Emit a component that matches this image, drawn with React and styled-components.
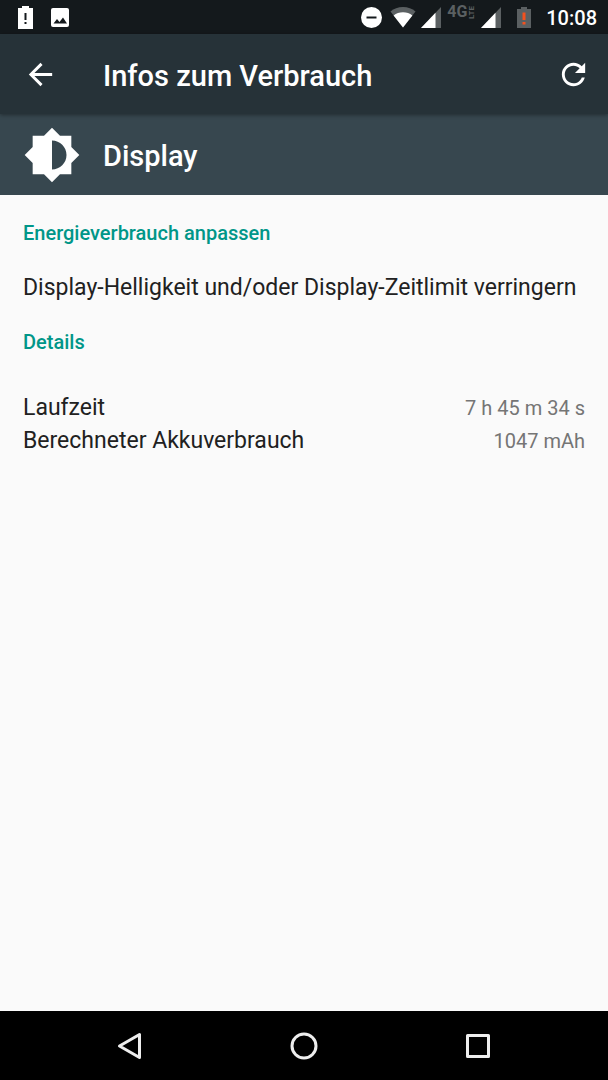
import React from 'react'
import styled, { createGlobalStyle } from 'styled-components'

const GlobalStyle = createGlobalStyle`
    * {
        box-sizing: border-box;
    }
    body {
        margin: 0;
        background: #fafafa;
        font-family: Roboto, "Noto Sans", sans-serif;
    }
    h1, h2, p, dl, dt, dd {
        margin: 0;
        font-weight: 400;
    }
`;

const details = [
    { label: 'Laufzeit', value: '7 h 45 m 34 s' },
    { label: 'Berechneter Akkuverbrauch', value: '1047 mAh' },
]

function SignalIcon() {
    return (
        <svg width="20" height="21" viewBox="0 0 20 21" aria-hidden="true">
            <path d="M20 0v21H0z" fill="#5b6062" />
            <path d="M14.500 5.800V21H0z" fill="#fff" />
        </svg>
    )
}

function StatusBar() {
    return (
        <StatusBarStyled>
            <div className="notifications">
                <svg width="15" height="23" viewBox="0 0 15 23" aria-hidden="true">
                    <path d="M4 0h7v2h4v21H0V2h4z" fill="#fff" />
                    <path d="M6.5 7h2v7h-2zM6.5 16h2v2h-2z" fill="#14191c" />
                </svg>
                <svg width="18" height="20" viewBox="0 0 18 20" aria-hidden="true">
                    <rect y="1" width="18" height="19" rx="2" fill="#fff" />
                    <path d="M2.5 16.500l3.500-4.500 2.500 3 3.500-4.500 4 6z" fill="#14191c" />
                </svg>
            </div>
            <div className="system">
                <svg width="21" height="21" viewBox="0 0 21 21" aria-hidden="true">
                    <circle cx="10.5" cy="10.5" r="10.5" fill="#fff" />
                    <path d="M5.5 9.5h10v2h-10z" fill="#14191c" />
                </svg>
                <svg className="wifi" width="26" height="21" viewBox="0 0 26 21" aria-hidden="true">
                    <path d="M13 20.500L.5 4.500C3.900 1.600 8 0 13 0s9.100 1.600 12.500 4.500z" fill="#5b6062" />
                    <path d="M13 20.500L3.600 8.500C6.300 6.300 9.300 5.200 13 5.200s6.700 1.100 9.400 3.300z" fill="#fff" />
                </svg>
                <SignalIcon />
                <Network>4G<small>LTE</small></Network>
                <SignalIcon />
                <svg className="battery" width="14" height="21" viewBox="0 0 14 21" aria-hidden="true">
                    <path d="M4 0h6v2h4v19H0V2h4z" fill="#5b6062" />
                    <path d="M5.500 5.500h3v7.500h-3zM5.500 15h3v2.500h-3z" fill="#f4511e" />
                </svg>
                <time>10:08</time>
            </div>
        </StatusBarStyled>
    )
}

function App() {
    return (
        <>
            <GlobalStyle />
            <Screen>
                <StatusBar />
                <AppBar>
                    <IconButton type="button" aria-label="Zurück">
                        <svg viewBox="0 0 24 24"><path d="M20 11H7.830l5.590-5.590L12 4l-8 8 8 8 1.410-1.410L7.830 13H20v-2z" /></svg>
                    </IconButton>
                    <Title as="h1">Infos zum Verbrauch</Title>
                    <IconButton type="button" aria-label="Aktualisieren">
                        <svg viewBox="0 0 24 24"><path d="M17.650 6.350C16.200 4.900 14.210 4 12 4c-4.420 0-7.990 3.580-7.990 8s3.570 8 7.990 8c3.730 0 6.840-2.550 7.730-6h-2.080c-.82 2.330-3.040 4-5.650 4-3.310 0-6-2.690-6-6s2.690-6 6-6c1.660 0 3.140.69 4.220 1.780L13 11h7V4l-2.350 2.350z" /></svg>
                    </IconButton>
                </AppBar>
                <Header>
                    <svg viewBox="0 0 24 24" aria-hidden="true">
                        <path d="M20 15.310L23.310 12 20 8.690V4h-4.690L12 .69 8.690 4H4v4.690L.69 12 4 15.310V20h4.690L12 23.310 15.310 20H20v-4.690zM12 18V6c3.310 0 6 2.690 6 6s-2.690 6-6 6z" />
                    </svg>
                    <Title>Display</Title>
                </Header>
                <Content>
                    <Category>Energieverbrauch anpassen</Category>
                    <Tip>Display-Helligkeit und/oder Display-Zeitlimit verringern</Tip>
                    <Category>Details</Category>
                    <DetailList>
                        {details.map(item => (
                            <DetailRow key={item.label}>
                                <dt>{item.label}</dt>
                                <dd>{item.value}</dd>
                            </DetailRow>
                        ))}
                    </DetailList>
                </Content>
                <NavBar>
                    <NavButton type="button" aria-label="Zurück">
                        <svg width="30" height="30" viewBox="0 0 30 30"><path d="M24.500 3.500v23L4.500 15z" /></svg>
                    </NavButton>
                    <NavButton type="button" aria-label="Startbildschirm">
                        <svg width="30" height="30" viewBox="0 0 30 30"><circle cx="15" cy="15" r="12" /></svg>
                    </NavButton>
                    <NavButton type="button" aria-label="Übersicht">
                        <svg width="30" height="30" viewBox="0 0 30 30"><rect x="4.500" y="4.500" width="21" height="21" /></svg>
                    </NavButton>
                </NavBar>
            </Screen>
        </>
    )
}

const Screen = styled.div`
    display: flex;
    flex-direction: column;
    min-height: 100vh;
`;

const StatusBarStyled = styled.header`
    display: flex;
    justify-content: space-between;
    height: 34px;
    padding: 0 11px 0 18px;
    background: #14191c;
    .notifications, .system{
        display: flex;
        align-items: center;
    }
    .notifications{
        gap: 18px;
    }
    .wifi{
        margin: 0 5px 0 8px;
    }
    .battery{
        margin: 0 15px 0 16px;
    }
    time{
        padding-top: 2px;
        color: #fff;
        font-size: 20px;
        font-weight: 500;
        line-height: 34px;
    }
`;

const Network = styled.span`
    display: flex;
    align-self: flex-start;
    align-items: center;
    width: 29px;
    margin: 4px 5px 0 6px;
    color: #5b6062;
    font-size: 16px;
    font-weight: 700;
    line-height: 16px;
    small{
        writing-mode: vertical-rl;
        transform: rotate(180deg);
        font-size: 8px;
        font-weight: 700;
        line-height: 10px;
    }
`;

const AppBar = styled.div`
    position: relative;
    display: flex;
    align-items: center;
    height: 80px;
    padding: 0 17px 0 23px;
    background: #263238;
    box-shadow: 0 1px 4px rgba(0, 0, 0, 0.4);
    color: #fff;
    h1{
        flex: 1;
        margin-left: 45px;
    }
`;

const Title = styled.h2`
    && {
        padding-top: 3px;
        font-size: 29px;
        font-weight: 500;
        line-height: 40px;
    }
`;

const IconButton = styled.button`
    width: 35px;
    height: 35px;
    padding: 0;
    border: 0;
    background: none;
    color: #fff;
    svg{
        display: block;
        fill: currentColor;
    }
`;

const Header = styled.div`
    display: flex;
    align-items: center;
    height: 81px;
    padding: 0 23px;
    gap: 22px;
    background: #37474f;
    color: #fff;
    svg{
        width: 58px;
        fill: currentColor;
    }
`;

const Content = styled.main`
    flex: 1;
    padding: 23px;
`;

const Category = styled.h2`
    color: #009688;
    font-size: 20px;
    font-weight: 500;
    line-height: 30px;
`;

const Tip = styled.p`
    margin: 23px 0 22px;
    color: #212121;
    font-size: 23px;
    line-height: 34px;
`;

const DetailList = styled.dl`
    margin-top: 34px;
`;

const DetailRow = styled.div`
    display: flex;
    justify-content: space-between;
    align-items: baseline;
    height: 33px;
    line-height: 33px;
    dt{
        color: #212121;
        font-size: 23px;
    }
    dd{
        color: #757575;
        font-size: 20px;
    }
`;

const NavBar = styled.nav`
    display: flex;
    justify-content: center;
    align-items: center;
    gap: 18%;
    height: 69px;
    background: #000;
`;

const NavButton = styled.button`
    display: flex;
    justify-content: center;
    align-items: center;
    width: 65px;
    height: 69px;
    padding: 0;
    border: 0;
    background: none;
    svg{
        fill: none;
        stroke: #eee;
        stroke-width: 3;
        stroke-linejoin: round;
    }
`;

export default App
